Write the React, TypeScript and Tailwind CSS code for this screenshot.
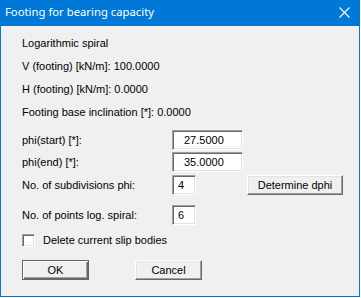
import React from "react";

const sunken =
  "bg-white border border-t-[#a0a0a0] border-l-[#a0a0a0] border-b-white border-r-white shadow-[inset_1px_1px_0_#696969,inset_-1px_-1px_0_#e3e3e3]";
const raised =
  "bg-[#f0f0f0] border border-t-white border-l-white border-b-[#696969] border-r-[#696969] shadow-[inset_-1px_-1px_0_#a0a0a0,inset_1px_1px_0_#e3e3e3]";

function Field({ value, wide }: { value: string; wide?: boolean }) {
  return (
    <div
      className={`${sunken} h-[20px] flex items-center ${wide ? "w-[71px] pl-[11px]" : "w-[24px] pl-[5px]"}`}
    >
      {value}
    </div>
  );
}

export default function App() {
  return (
    <div className="w-[361px] h-[298px] bg-white">
      <div className="w-[360px] h-[297px] bg-[#0078d7] flex flex-col">
        {/* Title bar */}
        <div className="h-[26px] flex items-center justify-between pl-[5px] pr-[10px] text-white text-[11.3px] font-['Noto_Sans',sans-serif]">
          <span className="-mt-[1px]">Footing for bearing capacity</span>
          <svg width="11" height="11" viewBox="0 0 11 11" className="-mt-[1px]">
            <path d="M0.5 0.5 L10.5 10.5 M10.5 0.5 L0.5 10.5" stroke="white" strokeWidth="1.1" />
          </svg>
        </div>

        {/* Body */}
        <div className="flex-1 mx-[1px] mb-[1px] bg-[#f0f0f0] pl-[21px] flex flex-col text-[11px] leading-[13px] text-black font-['Liberation_Sans',Arial,sans-serif]">
          <div className="mt-[11px] flex flex-col gap-[10px]">
            <div>Logarithmic spiral</div>
            <div>V (footing) [kN/m]: 100.0000</div>
            <div>H (footing) [kN/m]: 0.0000</div>
            <div>Footing base inclination [*]: 0.0000</div>
          </div>

          <div className="mt-[11px] flex items-center h-[20px]">
            <span className="w-[150px]">phi(start) [*]:</span>
            <Field value="27.5000" wide />
          </div>
          <div className="mt-[2px] flex items-center h-[20px]">
            <span className="w-[150px]">phi(end) [*]:</span>
            <Field value="35.0000" wide />
          </div>
          <div className="mt-[3px] flex items-center h-[20px]">
            <span className="w-[150px]">No. of subdivisions phi:</span>
            <Field value="4" />
            <button className={`${raised} ml-[51px] w-[96px] h-[20px] flex items-center justify-center`}>
              Determine dphi
            </button>
          </div>
          <div className="mt-[10px] flex items-center h-[20px]">
            <span className="w-[150px]">No. of points log. spiral:</span>
            <Field value="6" />
          </div>

          <div className="mt-[9px] flex items-center h-[13px]">
            <span className={`${sunken} w-[13px] h-[13px]`} />
            <span className="ml-[8px]">Delete current slip bodies</span>
          </div>

          <div className="mt-[13px] flex">
            <button className="w-[67px] h-[20px] bg-[#f0f0f0] border border-[#646464] shadow-[inset_1px_1px_0_white,inset_-1px_-1px_0_#696969,inset_-2px_-2px_0_#a0a0a0] flex items-center justify-center">
              OK
            </button>
            <button className={`${raised} ml-[46px] w-[67px] h-[20px] flex items-center justify-center`}>
              Cancel
            </button>
          </div>
        </div>
      </div>
    </div>
  );
}
